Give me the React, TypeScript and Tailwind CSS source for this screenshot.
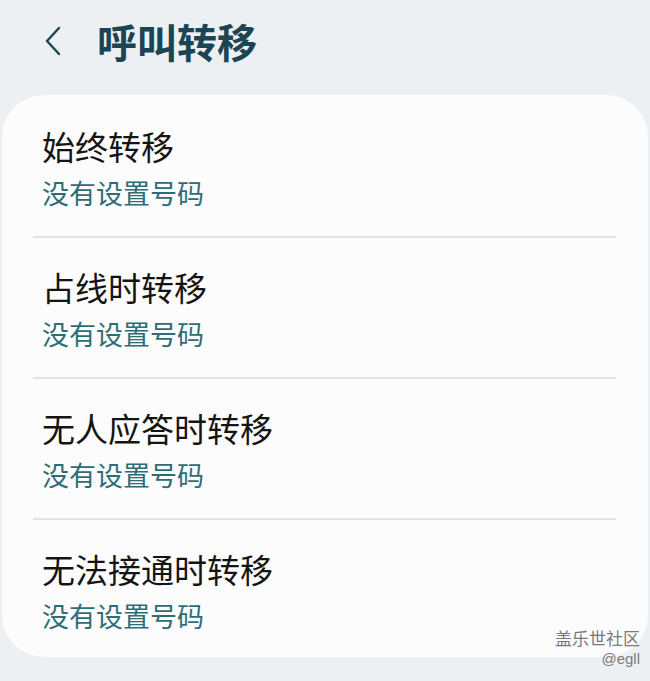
import React from 'react';

const rows = ['始终转移', '占线时转移', '无人应答时转移', '无法接通时转移'];

export default function App() {
  return (
    <div className="relative w-[650px] h-[681px] overflow-hidden bg-[#edf0f3] font-['Noto_Sans_CJK_SC',sans-serif]">
      <div className="flex items-center h-[85px] pl-[42px]">
        <svg width="22" height="34" viewBox="0 0 22 34" className="mt-[-4px]">
          <path d="M17 4 L5 17 L17 30" fill="none" stroke="#1d4452" strokeWidth="2.4" strokeLinecap="round" strokeLinejoin="round" />
        </svg>
        <h1 className="ml-[33px] text-[40px] leading-[48px] font-bold text-[#1b4553] mt-[-4px]">呼叫转移</h1>
      </div>

      <div className="mx-[2px] mt-[10px] pt-[2px] bg-[#fcfcfc] rounded-[42px] h-[562px]">
        {rows.map((title, i) => (
          <div key={i} className="pl-[31px] pr-[32px]">
            <div className="px-[9px] pt-[29px] pb-[25px]">
              <p className="text-[33px] leading-[40px] text-[#141414]">{title}</p>
              <p className="mt-[9px] text-[27px] leading-[36px] text-[#2e6d78]">没有设置号码</p>
            </div>
            {i < rows.length - 1 && <div className="h-[2px] bg-[#e3e3e3]" />}
          </div>
        ))}
      </div>

      <div className="absolute right-[10px] top-[627px] flex flex-col items-end text-[#7a7a7a]">
        <span className="text-[17px] leading-[22px]">盖乐世社区</span>
        <span className="text-[15px] leading-[20px] font-['Liberation_Sans',sans-serif]">@egll</span>
      </div>
    </div>
  );
}
